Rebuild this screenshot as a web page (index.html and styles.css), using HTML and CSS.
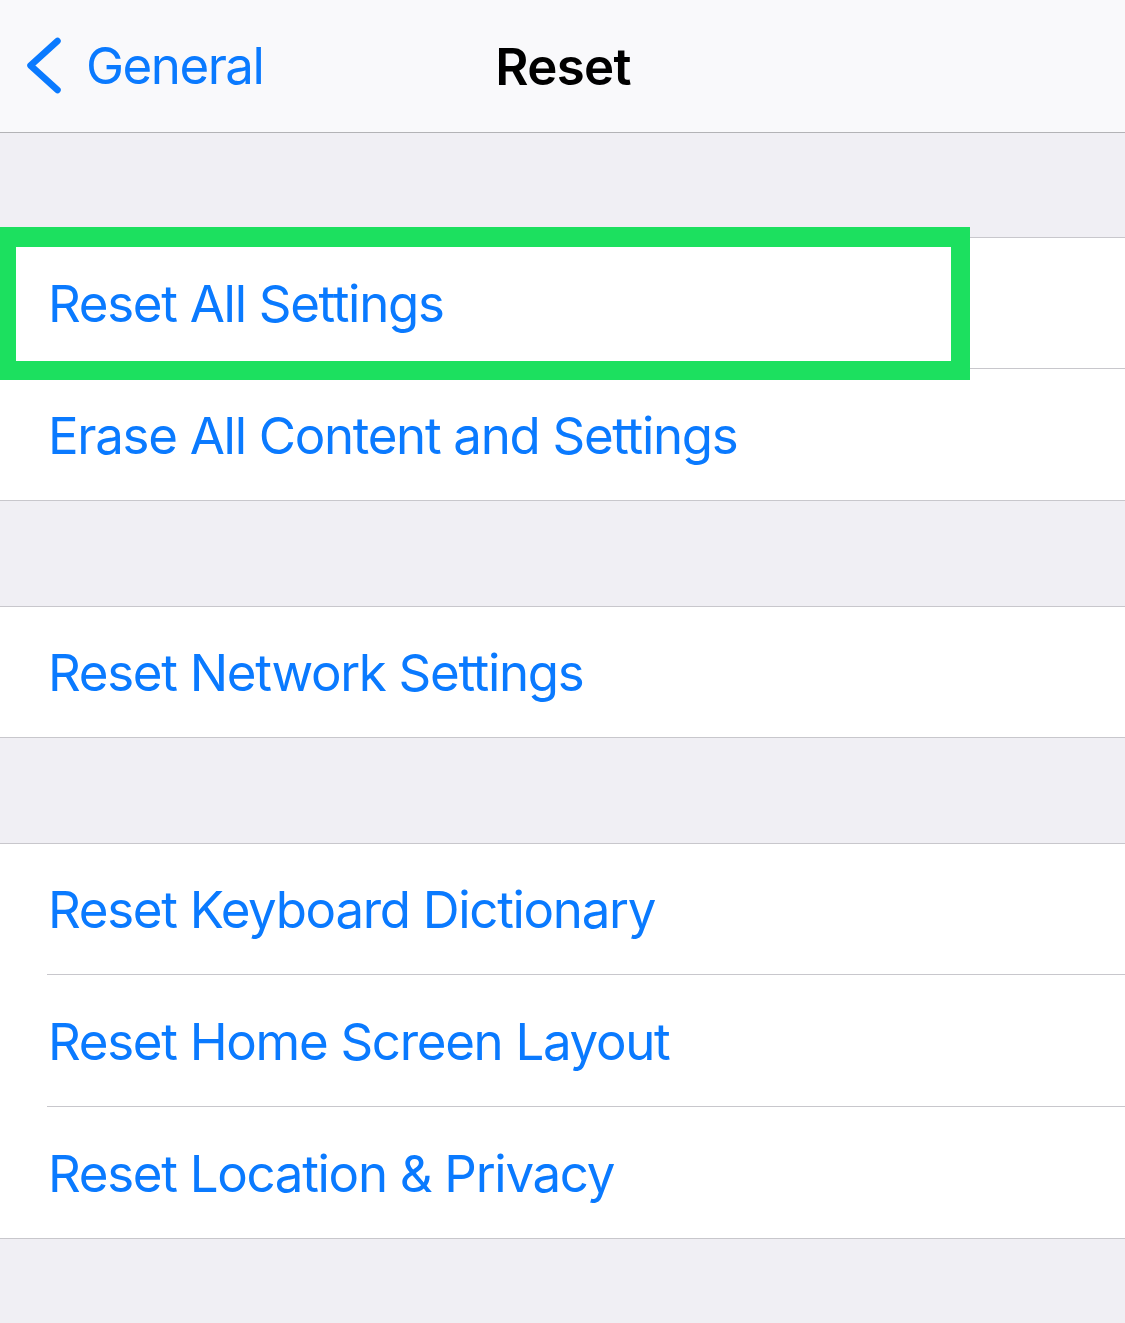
FILE: index.html
```html
<!DOCTYPE html>
<html>
    <head>
        <meta charset="utf-8">
        <title>Reset</title>
        <link rel="stylesheet" href="styles.css">
    </head>
    <body>
        <div class="screen">
            <!-- 导航栏 -->
            <div class="navbar">
                <a class="nav-back" href="#">
                    <svg class="nav-chevron" width="70" height="132" viewBox="0 0 70 132">
                        <path d="M57.5 41 L30.5 65.5 L57.5 90" fill="none" stroke="#0a7aff" stroke-width="6.5" stroke-linecap="round" stroke-linejoin="round"/>
                    </svg>
                    <span>General</span>
                </a>
                <div class="nav-title">Reset</div>
            </div>
            <!-- 列表 -->
            <div class="section-gap section-gap-first"></div>
            <div class="group">
                <div class="cell cell-highlight">
                    <span class="cell-label">Reset All Settings</span>
                    <div class="highlight-box"></div>
                </div>
                <div class="cell">
                    <span class="cell-label">Erase All Content and Settings</span>
                </div>
            </div>
            <div class="section-gap"></div>
            <div class="group">
                <div class="cell">
                    <span class="cell-label">Reset Network Settings</span>
                </div>
            </div>
            <div class="section-gap"></div>
            <div class="group">
                <div class="cell">
                    <span class="cell-label">Reset Keyboard Dictionary</span>
                </div>
                <div class="cell">
                    <span class="cell-label">Reset Home Screen Layout</span>
                </div>
                <div class="cell">
                    <span class="cell-label">Reset Location &amp; Privacy</span>
                </div>
            </div>
        </div>
    </body>
</html>
```

FILE: styles.css
```css
html, body {
    margin: 0;
    padding: 0;
}
body {
    background-color: #f0eff4;
    font-family: Inter, "Noto Sans", "Liberation Sans", sans-serif;
}
.screen {
    width: 1125px;
    height: 1323px;
    overflow: hidden;
    background-color: #f0eff4;
}
.navbar {
    height: 132px;
    background-color: #f9f9fb;
    border-bottom: 1px solid #b3b3b6;
    display: flex;
    align-items: center;
    justify-content: center;
    position: relative;
}
.nav-back {
    position: absolute;
    left: 0;
    top: 0;
    height: 132px;
    display: flex;
    align-items: center;
    color: #0a7aff;
    text-decoration: none;
    font-size: 51px;
    letter-spacing: -1.5px;
}
.nav-chevron {
    display: block;
}
.nav-back span {
    margin-left: 16px;
    margin-top: -1px;
}
.nav-title {
    font-size: 51px;
    font-weight: 600;
    color: #000;
    letter-spacing: -0.7px;
    margin-left: 1px;
}
.section-gap {
    height: 105px;
}
.section-gap-first {
    height: 104px;
}
.group {
    background-color: #fff;
    border-top: 1px solid #c8c7cc;
    border-bottom: 1px solid #c8c7cc;
}
.cell {
    height: 130px;
    display: flex;
    align-items: center;
    padding-left: 48px;
    position: relative;
}
.cell + .cell {
    height: 131px;
    border-top: 1px solid #c8c7cc;
    border-image: linear-gradient(to right, transparent 48px, #c8c7cc 48px) 1;
}
.cell-label {
    font-size: 51px;
    color: #0a7aff;
    letter-spacing: -1.3px;
}
.cell + .cell .cell-label {
    margin-top: 2px;
}
.highlight-box {
    position: absolute;
    z-index: 1;
    left: -3px;
    top: -11px;
    width: 935px;
    height: 114px;
    border: 19px solid #1ce05f;
    border-top-width: 20px;
    pointer-events: none;
}
```
